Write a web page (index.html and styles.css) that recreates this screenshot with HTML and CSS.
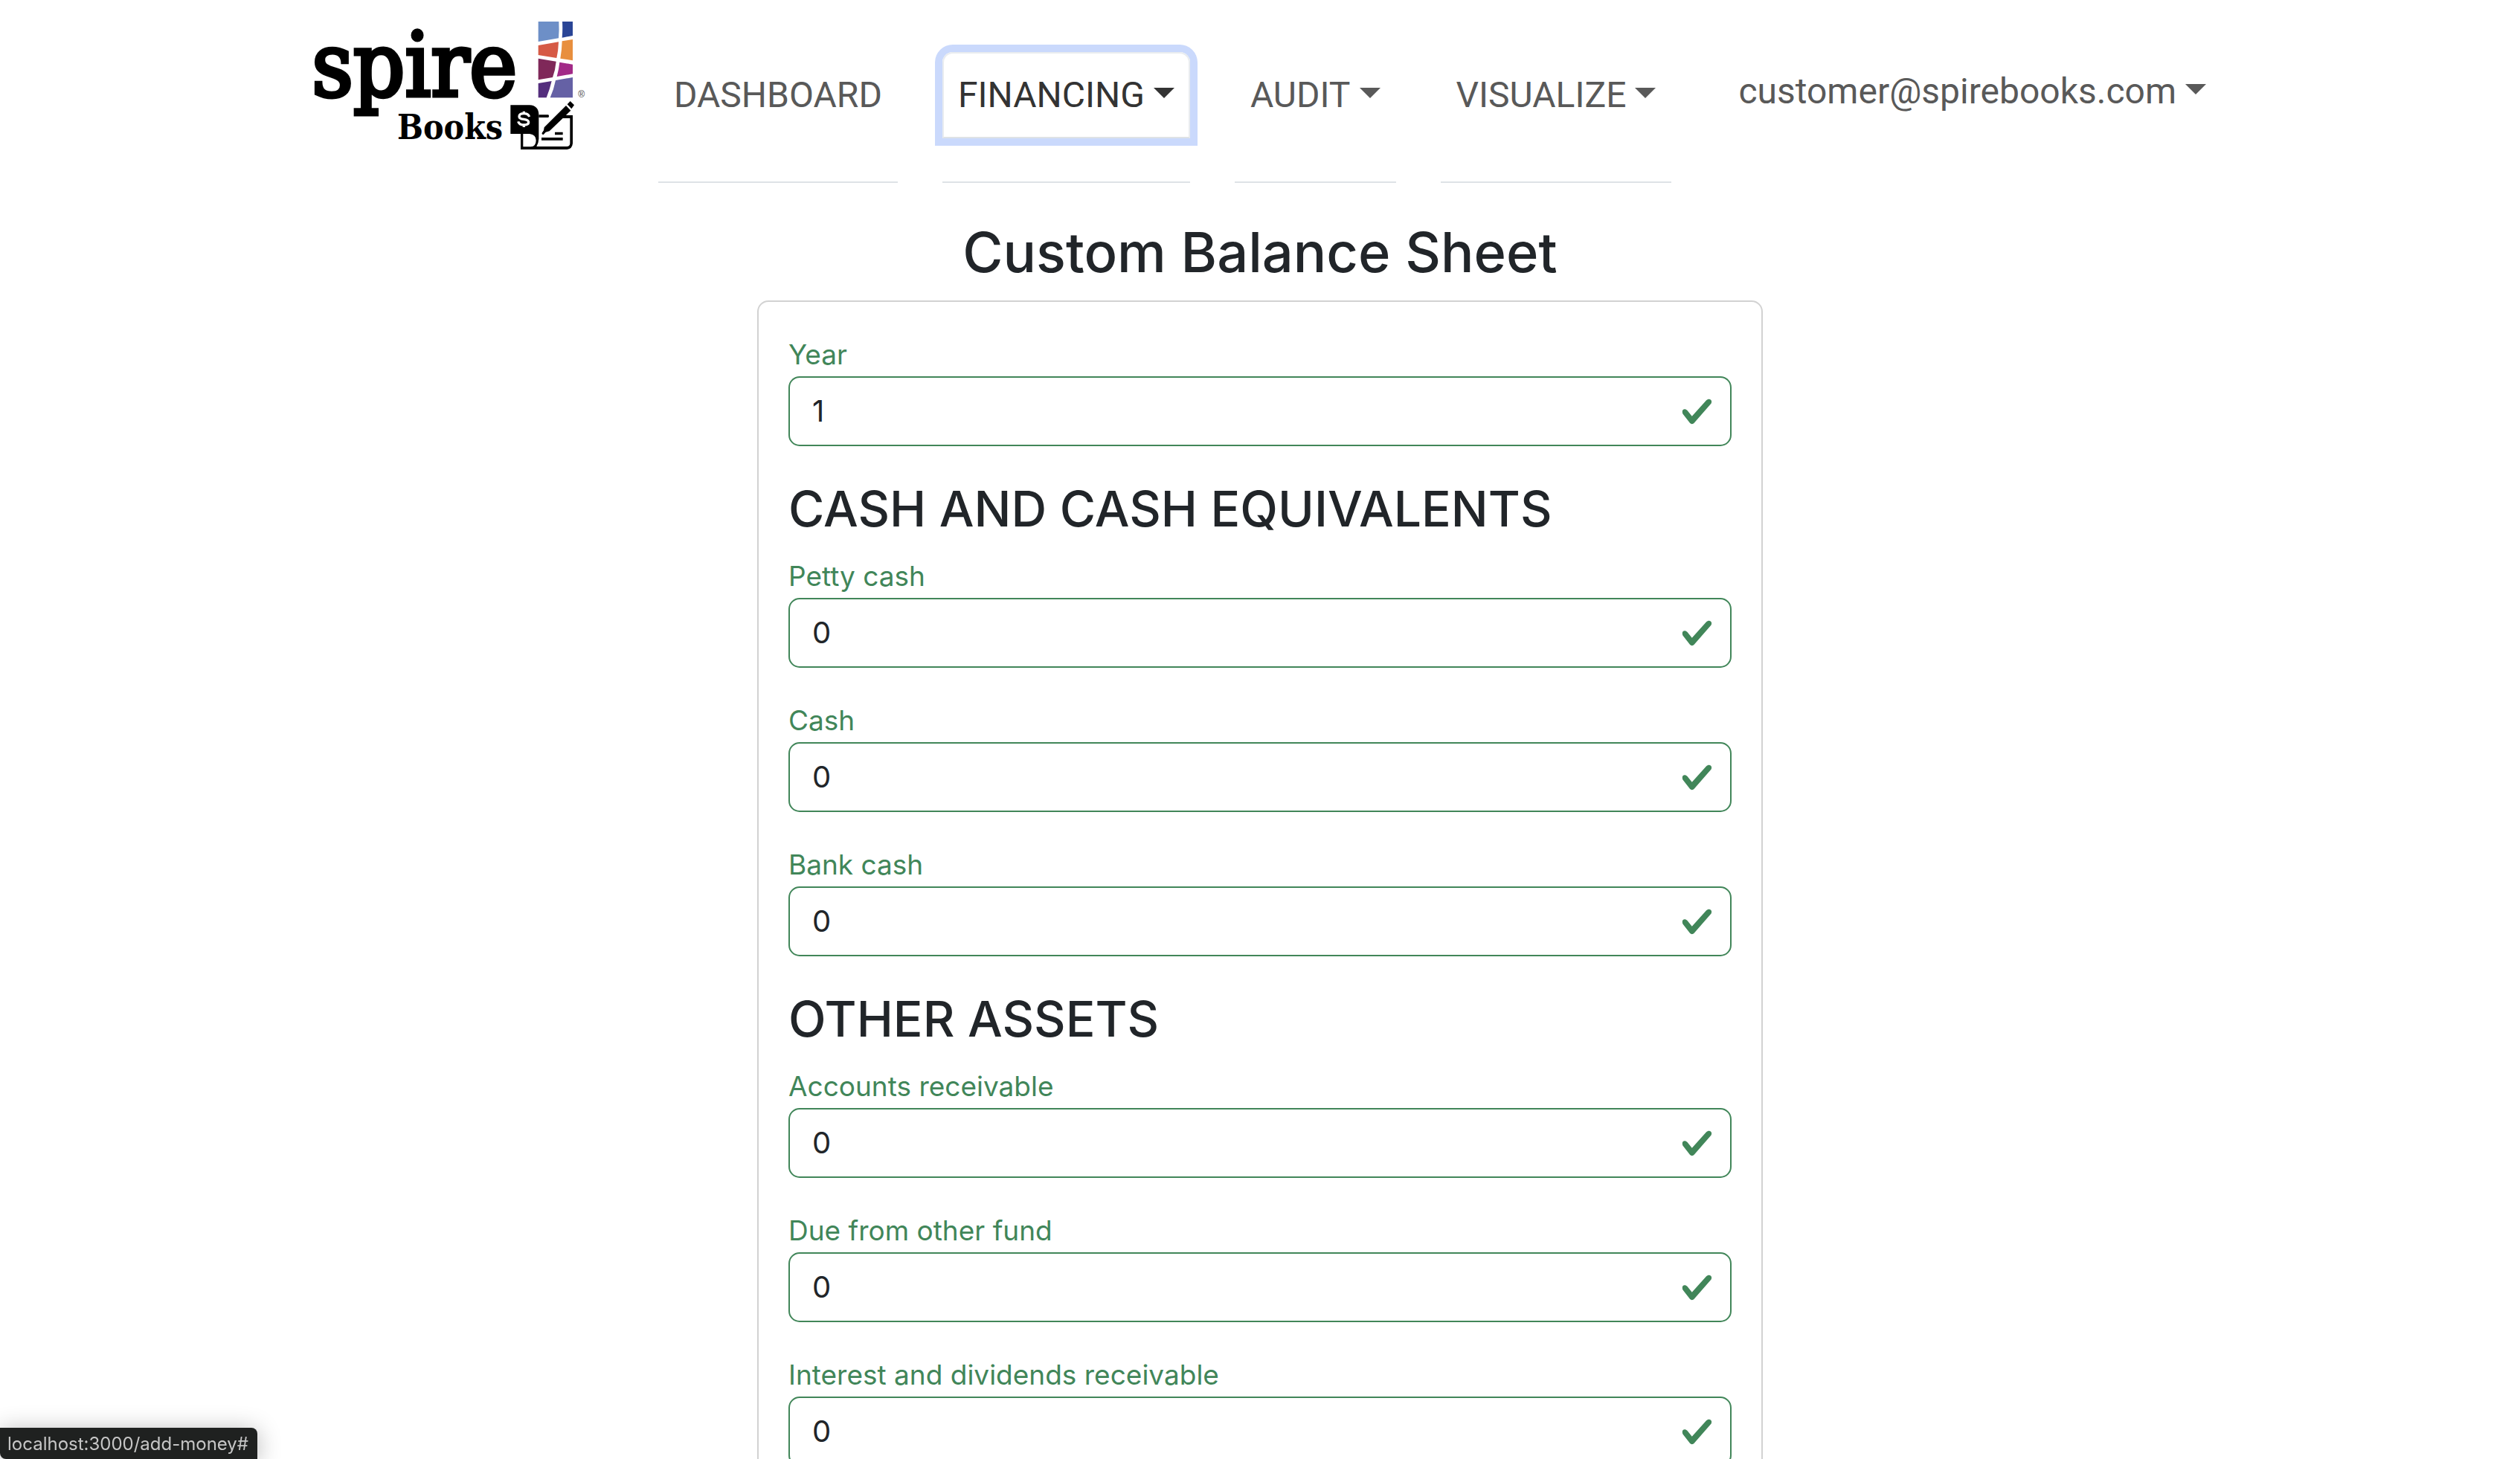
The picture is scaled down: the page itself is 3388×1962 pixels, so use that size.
FILE: index.html
```html
<!DOCTYPE html>
<html lang="en">
<head>
<meta charset="utf-8">
<meta name="viewport" content="width=device-width, initial-scale=1">
<title>Spire Books - Custom Balance Sheet</title>
<link rel="stylesheet" href="styles.css">
</head>
<body>
<div class="page">
  <header class="header">
    <a class="brand" href="#" aria-label="Spire Books">
      <svg class="logo" viewBox="60 51 1098 528">
        <text class="logo-name" x="52" y="357">spire</text>
        <text class="logo-sub" x="396" y="530">Books</text>
        <path fill="#6d8fc7" d="M965 57H1048Q1050 92 1047 124L965 138Z"/>
        <path fill="#2a4596" d="M1062 57H1104V114L1061 122Q1064 90 1062 57Z"/>
        <path fill="#d65a45" d="M965 153L1047 139Q1046 175 1039 204L965 192Z"/>
        <path fill="#e88f3e" d="M1061 136L1104 129V214L1054 206Q1060 172 1061 136Z"/>
        <path fill="#7f2859" d="M965 206L1037 218Q1034 252 1023 282L965 292Z"/>
        <path fill="#a22a87" d="M1051 221L1104 230V268L1040 279Q1048 250 1051 221Z"/>
        <path fill="#542e7d" d="M965 306L1019 297Q1011 332 998 364H965Z"/>
        <path fill="#6561a5" d="M1035 294L1104 282V364H1013Q1028 330 1035 294Z"/>
        <text class="logo-mark" x="1126" y="362">®</text>
        <path d="M853 394H930Q967 396 967 434V530Q966 548 958 561H1080Q1093 560 1093 548V447H1062L1072 435H1104V548Q1102 571 1080 573H894V510H853Z"/>
        <path fill="#fff" d="M904 510H930Q956 514 956 536Q956 560 935 562H904Z"/>
        <path d="M967 433H1006Q1011 438 1006 444H967ZM1032 503H1064V514H1032ZM978 525H1064V536H978Z"/>
        <path d="M1077 396L1096 416L1010 499L995 503L986 513Q978 514 980 506L987 496L989 484ZM1094 378L1110 394L1099 409L1082 391Z"/>
        <path fill="none" stroke="#fff" stroke-width="10" d="M929 441Q924 428 907 428Q888 428 888 440Q888 449 907 451Q926 454 926 463Q926 474 907 474Q888 474 884 460M907 419V430M907 472V483"/>
      </svg>
    </a>
    <nav class="nav" aria-label="Main">
      <ul class="nav-list">
        <li class="nav-item"><a class="nav-link" href="#">DASHBOARD</a></li>
        <li class="nav-item"><button class="nav-link nav-link-focus caret" type="button" aria-haspopup="true">FINANCING</button></li>
        <li class="nav-item"><button class="nav-link caret" type="button" aria-haspopup="true">AUDIT</button></li>
        <li class="nav-item"><button class="nav-link caret" type="button" aria-haspopup="true">VISUALIZE</button></li>
      </ul>
    </nav>
    <button class="user-menu caret" type="button" aria-haspopup="true">customer@spirebooks.com</button>
  </header>
  <main class="main">
    <h2 class="title">Custom Balance Sheet</h2>
    <form class="card">
      <div class="field"><label class="label" for="year">Year</label><input class="input" id="year" type="text" value="1"></div>
      <h3 class="section">CASH AND CASH EQUIVALENTS</h3>
      <div class="field"><label class="label" for="petty">Petty cash</label><input class="input" id="petty" type="text" value="0"></div>
      <div class="field"><label class="label" for="cash">Cash</label><input class="input" id="cash" type="text" value="0"></div>
      <div class="field"><label class="label" for="bank">Bank cash</label><input class="input" id="bank" type="text" value="0"></div>
      <h3 class="section">OTHER ASSETS</h3>
      <div class="field"><label class="label" for="receivable">Accounts receivable</label><input class="input" id="receivable" type="text" value="0"></div>
      <div class="field"><label class="label" for="due">Due from other fund</label><input class="input" id="due" type="text" value="0"></div>
      <div class="field"><label class="label" for="interest">Interest and dividends receivable</label><input class="input" id="interest" type="text" value="0"></div>
    </form>
  </main>
</div>
<div class="status">localhost:3000/add-money#</div>
</body>
</html>
```
FILE: styles.css
```css
* {
  box-sizing: border-box;
}

body {
  margin: 0;
  background: #fff;
  color: #212529;
  font-family: Inter, "Liberation Sans", sans-serif;
  font-size: 40px;
  line-height: 60px;
}

.page {
  height: 100vh;
  overflow-y: auto;
  scrollbar-width: none;
}

.header {
  display: flex;
  align-items: flex-start;
  max-width: 2544px;
  margin: 0 auto;
  padding-top: 27px;
}

.brand,
.logo {
  display: block;
}

.brand {
  margin-right: 97px;
}

.logo {
  width: 366px;
  height: 176px;
  overflow: visible;
}

.logo-name {
  font: 362px "DejaVu Serif Condensed", "DejaVu Serif", serif;
  stroke: #000;
  stroke-width: 15px;
}

.logo-sub {
  font: bold 138px "DejaVu Serif Condensed", "DejaVu Serif", serif;
}

.logo-mark {
  font: 36px "Liberation Sans", sans-serif;
  fill: #444;
}

.nav {
  padding-top: 43px;
}

.nav-list {
  display: flex;
  gap: 60px;
  margin: 0;
  padding: 0;
  list-style: none;
}

.nav-item {
  padding-bottom: 58px;
  border-bottom: 2px solid #dee2e6;
}

.nav-link,
.user-menu {
  display: block;
  margin: 0;
  background: none;
  color: #595959;
  font: 48px/72px Roboto, sans-serif;
  text-decoration: none;
  white-space: nowrap;
}

.nav-link {
  padding: 20px 19px;
  border: 2px solid transparent;
  border-radius: 14px 14px 0 0;
}

.nav-link-focus {
  border-color: #e9ecef #e9ecef #dee2e6;
  box-shadow: 0 0 0 10px #cad9fc;
  color: #333;
}

.user-menu {
  margin: 60px 0 0 auto;
  padding: 0;
  border: 0;
}

.caret::after {
  content: "";
  display: inline-block;
  margin-left: 12px;
  vertical-align: 12px;
  border: 14px solid transparent;
  border-top-color: currentColor;
  border-bottom: 0;
}

.main {
  max-width: 1352px;
  margin: 0 auto;
  padding: 42px 0;
}

.title,
.section {
  margin: 0;
  font-weight: 500;
}

.title {
  margin-bottom: 14px;
  font-size: 74px;
  line-height: 102px;
  text-align: center;
}

.section {
  margin-bottom: 16px;
  font-size: 66px;
  line-height: 88px;
}

.card {
  padding: 40px;
  border: 2px solid #d2d2d2;
  border-radius: 15px;
}

.field {
  margin-bottom: 40px;
}

.label {
  display: block;
  padding-top: 2px;
  color: #418659;
  font-size: 37px;
  line-height: 58px;
}

.input {
  display: block;
  width: 100%;
  padding: 15px 30px;
  border: 2px solid #418659;
  border-radius: 15px;
  background: #fff url("data:image/svg+xml,%3Csvg xmlns='http://www.w3.org/2000/svg' viewBox='0 0 8 8'%3E%3Cpath fill='%23418659' d='M2.3 6.73.6 4.53c-.4-1.04.46-1.4 1.1-.8l1.1 1.4 3.4-3.8c.6-.63 1.6-.27 1.2.7l-4 4.6c-.43.5-.8.4-1.1.1z'/%3E%3C/svg%3E") no-repeat right 22px center / 45px 45px;
  color: #212529;
  font: inherit;
}

.status {
  position: fixed;
  bottom: 0;
  left: 0;
  padding: 7px 12px 5px 10px;
  border-radius: 0 8px 0 8px;
  background: #1f2120;
  box-shadow: 0 4px 32px rgb(0 0 0 / 30%);
  color: #c6c6c6;
  font-size: 24px;
  line-height: 30px;
}
```
